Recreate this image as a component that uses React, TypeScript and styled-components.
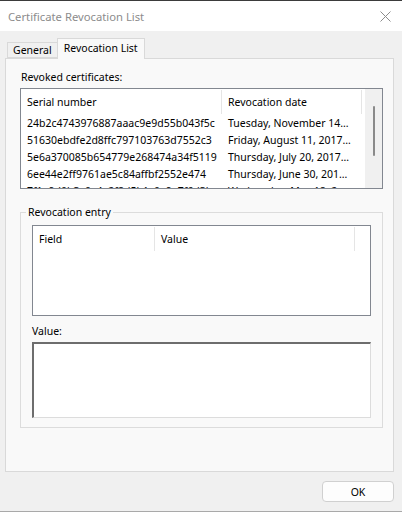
import React from "react";
import styled, { createGlobalStyle } from "styled-components";

const GlobalStyle = createGlobalStyle`
  html, body {
    margin: 0;
    padding: 0;
    background: #f0f0f0;
  }
  body {
    font-family: "Noto Sans", "Open Sans", sans-serif;
    font-size: 10.5px;
    color: #000;
  }
  * {
    box-sizing: border-box;
  }
`;

const Window = styled.div`
  width: 402px;
  height: 512px;
  display: flex;
  flex-direction: column;
  background: #f0f0f0;
  border-top: 1px solid #3b3b3b;
  border-bottom: 1px solid #a9a9a9;
`;

const TitleBar = styled.div`
  height: 30px;
  flex: none;
  display: flex;
  align-items: center;
  justify-content: space-between;
  padding: 0 10px 0 8px;
  background: #fff;
  color: #8c8c8c;
  font-size: 11.25px;
`;

const CloseButton = styled.button`
  border: 0;
  background: transparent;
  padding: 0;
  width: 14px;
  height: 14px;
  display: flex;
  align-items: center;
  justify-content: center;
`;

const Body = styled.div`
  flex: 1;
  display: flex;
  flex-direction: column;
  padding: 7px 8px 9px 5px;
`;

const TabStrip = styled.div`
  display: flex;
  align-items: flex-end;
  height: 20px;
  padding-left: 2px;
`;

const Tab = styled.div<{ $active?: boolean }>`
  height: ${({ $active }) => ($active ? "21px" : "16px")};
  padding: ${({ $active }) => ($active ? "0 6px 3px" : "0 5px")};
  display: flex;
  align-items: center;
  border: 1px solid #d9d9d9;
  border-bottom: ${({ $active }) => ($active ? "none" : "1px solid #d9d9d9")};
  border-right: ${({ $active }) => ($active ? "1px solid #d9d9d9" : "none")};
  background: ${({ $active }) => ($active ? "#f9f9f9" : "#f0f0f0")};
  margin-bottom: ${({ $active }) => ($active ? "-1px" : "0")};
  position: relative;
  z-index: ${({ $active }) => ($active ? 1 : 0)};
  white-space: nowrap;
`;

const TabPanel = styled.div`
  flex: 1;
  display: flex;
  flex-direction: column;
  border: 1px solid #d9d9d9;
  background: #f9f9f9;
  padding: 11px 10px 0 14px;
`;

const Label = styled.div<{ $indent?: number; $gap?: number }>`
  line-height: 15px;
  padding-left: ${({ $indent }) => $indent ?? 0}px;
  margin-top: ${({ $gap }) => $gap ?? 0}px;
  margin-bottom: 3px;
`;

const ListBox = styled.div<{ $height: number }>`
  height: ${({ $height }) => $height}px;
  border: 1px solid #828790;
  background: #fff;
  display: flex;
  overflow: hidden;
`;

const ListBody = styled.div`
  flex: 1;
  min-width: 0;
  overflow: hidden;
`;

const HeaderRow = styled.div`
  display: flex;
  height: 25px;
`;

const HeaderCell = styled.div<{ $width?: number }>`
  width: ${({ $width }) => ($width ? `${$width}px` : "auto")};
  flex: ${({ $width }) => ($width ? "none" : "1")};
  padding: 0 0 0 6px;
  display: flex;
  align-items: center;
  border-right: 1px solid #e5e5e5;
  margin: 1px 0 0;
  white-space: nowrap;
`;

const Row = styled.div`
  display: flex;
  height: 17px;
  align-items: center;
`;

const Cell = styled.div<{ $width: number; $trail?: number }>`
  width: ${({ $width }) => $width}px;
  flex: none;
  padding: 0 ${({ $trail }) => $trail ?? 4}px 0 6px;
  white-space: nowrap;
  overflow: hidden;
  text-overflow: ellipsis;
`;

const ScrollTrack = styled.div`
  width: 17px;
  flex: none;
  background: #f0f0f0;
  padding-top: 17px;
  display: flex;
  justify-content: center;
`;

const ScrollThumb = styled.div`
  width: 2px;
  height: 50px;
  background: #8a8a8a;
  border-radius: 1px;
`;

const GroupBox = styled.fieldset`
  margin: 16px 0 0;
  padding: 5px 11px 9px 11px;
  border: 1px solid #dcdcdc;
  min-width: 0;
  display: flex;
  flex-direction: column;
`;

const Legend = styled.legend`
  padding: 0 2px;
  margin-left: -6px;
  line-height: 15px;
`;

const ValueBox = styled.div`
  height: 76px;
  background: #fff;
  border-top: 2px solid #6d6d6d;
  border-left: 2px solid #6d6d6d;
  border-right: 1px solid #dcdcdc;
  border-bottom: 1px solid #dcdcdc;
`;

const Footer = styled.div`
  display: flex;
  justify-content: flex-end;
  padding-top: 9px;
`;

const Button = styled.button`
  width: 72px;
  height: 21px;
  border: 1px solid #d0d0d0;
  border-radius: 4px;
  background: #fdfdfd;
  font-family: inherit;
  font-size: 10.5px;
  color: #000;
  padding: 0;
`;

const revoked = [
  ["24b2c4743976887aaac9e9d55b043f5c", "Tuesday, November 14, 2017 4:10:33 PM"],
  ["51630ebdfe2d8ffc797103763d7552c3", "Friday, August 11, 2017 5:18:24 PM"],
  ["5e6a370085b654779e268474a34f5119", "Thursday, July 20, 2017 9:21:05 AM"],
  ["6ee44e2ff9761ae5c84affbf2552e474", "Thursday, June 30, 2016 11:02:41 AM"],
  ["7f1a9d0b3c6e4a2f8d5b1c0e9a7f6d3b", "Wednesday, May 18, 2016 2:47:19 PM"],
];

export default function App() {
  return (
    <>
      <GlobalStyle />
      <Window>
        <TitleBar>
          <span>Certificate Revocation List</span>
          <CloseButton aria-label="Close">
            <svg width="11" height="11" viewBox="0 0 11 11">
              <path d="M0.5 0.5 L10.5 10.5 M10.5 0.5 L0.5 10.5" stroke="#8c8c8c" strokeWidth="1" />
            </svg>
          </CloseButton>
        </TitleBar>
        <Body>
          <TabStrip>
            <Tab>General</Tab>
            <Tab $active>Revocation List</Tab>
          </TabStrip>
          <TabPanel>
            <Label $indent={1}>Revoked certificates:</Label>
            <ListBox $height={101}>
              <ListBody>
                <HeaderRow>
                  <HeaderCell $width={201}>Serial number</HeaderCell>
                  <HeaderCell $width={140}>Revocation date</HeaderCell>
                </HeaderRow>
                {revoked.map(([serial, date]) => (
                  <Row key={serial}>
                    <Cell $width={201}>{serial}</Cell>
                    <Cell $width={140} $trail={11}>
                      {date}
                    </Cell>
                  </Row>
                ))}
              </ListBody>
              <ScrollTrack>
                <ScrollThumb />
              </ScrollTrack>
            </ListBox>
            <GroupBox>
              <Legend>Revocation entry</Legend>
              <ListBox $height={91}>
                <ListBody>
                  <HeaderRow>
                    <HeaderCell $width={122}>Field</HeaderCell>
                    <HeaderCell $width={200}>Value</HeaderCell>
                  </HeaderRow>
                </ListBody>
              </ListBox>
              <Label $gap={8}>Value:</Label>
              <ValueBox />
            </GroupBox>
          </TabPanel>
          <Footer>
            <Button>OK</Button>
          </Footer>
        </Body>
      </Window>
    </>
  );
}
